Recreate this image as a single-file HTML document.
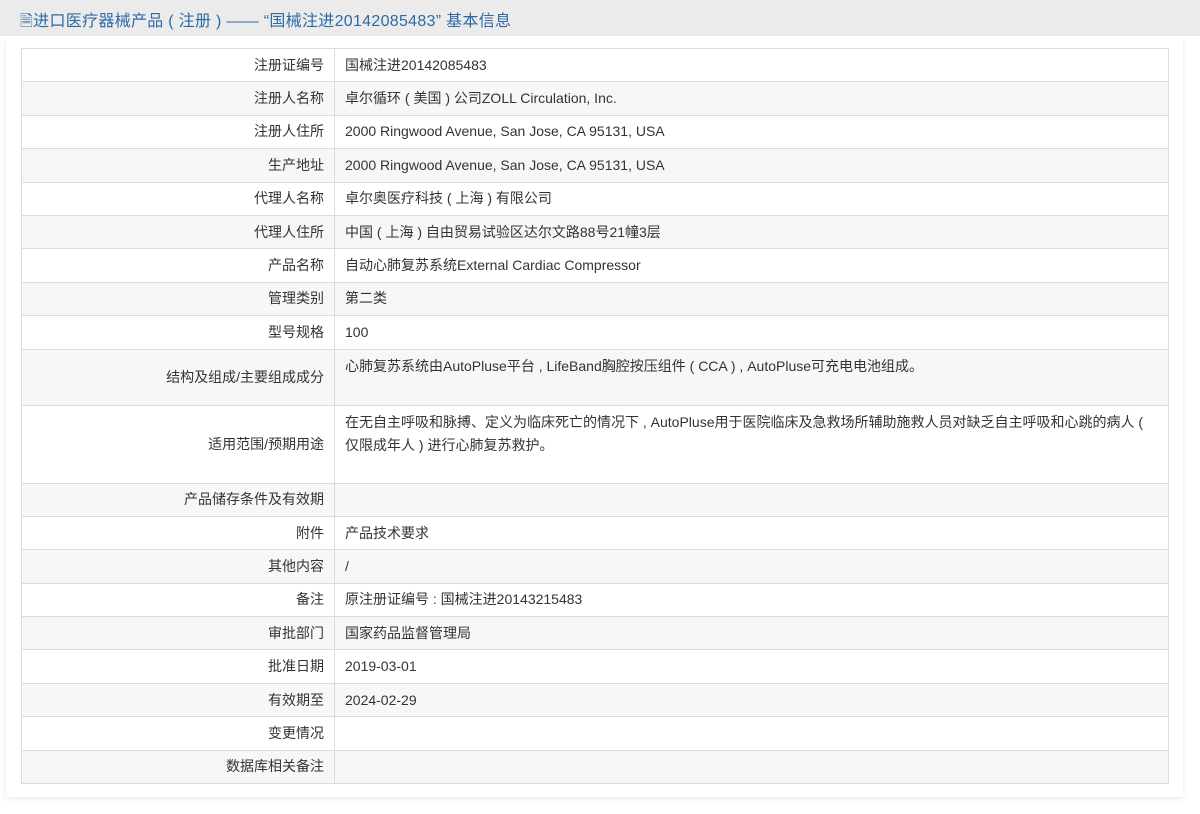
<!DOCTYPE html>
<html><head><meta charset="utf-8"><style>
body{margin:0;width:1200px;height:814px;background:#fff;font-family:"Liberation Sans","Noto Sans CJK SC",sans-serif;font-size:14px;color:#333;position:relative;overflow:hidden}
.hd{position:absolute;left:0;top:0;width:1200px;height:36px;background:#ebebeb}
.hd span{position:absolute;left:20px;top:7px;font-size:16px;color:#2d6aa3;letter-spacing:0.3px;white-space:nowrap}
.panel{position:absolute;left:6px;top:36px;width:1177px;height:761px;background:#fff;box-shadow:0 2px 6px rgba(0,0,0,.08)}
table{position:absolute;left:21px;top:48px;width:1148px;border-collapse:collapse;border:1px solid #d4d4d4}
td{border:1px solid #dcdcdc;padding:0 10px;height:32.4px;line-height:23px}
td.l{width:292px;text-align:right;}
tr:nth-child(even) td{background:#f7f7f7}
td.t{vertical-align:top;padding-top:5px}
</style></head><body>
<div class="hd"><span>🗎进口医疗器械产品 ( 注册 ) —— “国械注进20142085483” 基本信息</span></div>
<div class="panel"></div>
<table>
<tr><td class="l">注册证编号</td><td>国械注进20142085483</td></tr>
<tr><td class="l">注册人名称</td><td>卓尔循环 ( 美国 ) 公司ZOLL Circulation, Inc.</td></tr>
<tr><td class="l">注册人住所</td><td>2000 Ringwood Avenue, San Jose, CA 95131, USA</td></tr>
<tr><td class="l">生产地址</td><td>2000 Ringwood Avenue, San Jose, CA 95131, USA</td></tr>
<tr><td class="l">代理人名称</td><td>卓尔奥医疗科技 ( 上海 ) 有限公司</td></tr>
<tr><td class="l">代理人住所</td><td>中国 ( 上海 ) 自由贸易试验区达尔文路88号21幢3层</td></tr>
<tr><td class="l">产品名称</td><td>自动心肺复苏系统External Cardiac Compressor</td></tr>
<tr><td class="l">管理类别</td><td>第二类</td></tr>
<tr><td class="l">型号规格</td><td>100</td></tr>
<tr><td class="l" style="height:55px">结构及组成/主要组成成分</td><td class="t">心肺复苏系统由AutoPluse平台 , LifeBand胸腔按压组件 ( CCA ) , AutoPluse可充电电池组成。</td></tr>
<tr><td class="l" style="height:77px">适用范围/预期用途</td><td class="t">在无自主呼吸和脉搏、定义为临床死亡的情况下 , AutoPluse用于医院临床及急救场所辅助施救人员对缺乏自主呼吸和心跳的病人 ( 仅限成年人 ) 进行心肺复苏救护。</td></tr>
<tr><td class="l">产品储存条件及有效期</td><td></td></tr>
<tr><td class="l">附件</td><td>产品技术要求</td></tr>
<tr><td class="l">其他内容</td><td>/</td></tr>
<tr><td class="l">备注</td><td>原注册证编号 : 国械注进20143215483</td></tr>
<tr><td class="l">审批部门</td><td>国家药品监督管理局</td></tr>
<tr><td class="l">批准日期</td><td>2019-03-01</td></tr>
<tr><td class="l">有效期至</td><td>2024-02-29</td></tr>
<tr><td class="l">变更情况</td><td></td></tr>
<tr><td class="l">数据库相关备注</td><td></td></tr>
</table>
</body></html>
